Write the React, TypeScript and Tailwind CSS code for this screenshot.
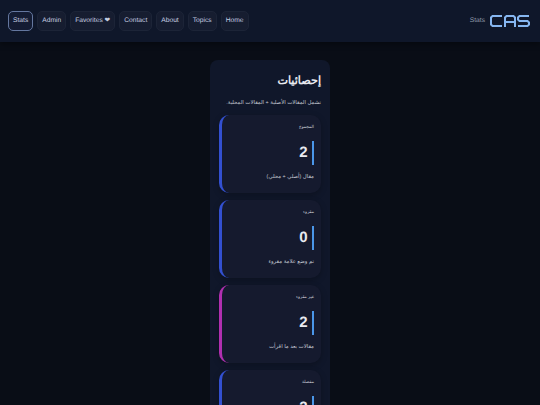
import { FC } from 'react'

const navItems = ['Stats', 'Admin', 'Favorites ❤', 'Contact', 'About', 'Topics', 'Home']

const stats = [
  { label: 'المجموع', value: 2, note: 'مقال (أصلي + محلي)', accent: 'border-l-[#3350d0]' },
  { label: 'مقروء', value: 0, note: 'تم وضع علامة مقروء', accent: 'border-l-[#3350d0]' },
  { label: 'غير مقروء', value: 2, note: 'مقالات بعد ما اقرأت', accent: 'border-l-[#b02fb0]' },
  { label: 'مفضلة', value: 2, note: 'مقالات مفضلة', accent: 'border-l-[#3350d0]' },
]

const StatCard: FC<(typeof stats)[number]> = ({ label, value, note, accent }) => (
  <div className={`h-[78px] shrink-0 rounded-[10px] border-l-[3px] bg-[#151a2e] pl-2 pr-[7px] pt-[9px] shadow-[0_2px_6px_rgba(0,0,0,0.25)] ${accent}`}>
    <div className="h-[6px] text-[4.3px] leading-[6px] text-[#c4c8d2]">{label}</div>
    <div className="mt-[11px] flex h-6 items-center justify-start gap-[4.5px]">
      <div className="h-6 w-[2px] bg-[#4a96e8]" />
      <div className="text-[15px] font-bold leading-6 text-[#e8eaf0]">{value}</div>
    </div>
    <div className="mt-[8px] text-[5.4px] leading-[8px] text-[#c4c8d2]">{note}</div>
  </div>
)

export default function App() {
  return (
    <div className="h-[405px] overflow-hidden bg-[#090d16] font-['Liberation_Sans',sans-serif] antialiased [text-rendering:geometricPrecision]">
      <header className="flex h-[42px] items-center justify-between bg-[#0f172a] pl-2 pr-[10px] shadow-[0_2px_6px_rgba(0,0,0,0.4)]">
        <nav className="flex items-center gap-1">
          {navItems.map((item, i) => (
            <a
              key={item}
              className={`flex h-5 items-center whitespace-nowrap rounded-[5px] border px-[4px] text-[6.7px] text-[#c5cee0] ${
                i === 0 ? 'border-[#64779f] bg-[#141c33]' : 'border-[#1c2437] bg-[#161d30]'
              }`}
            >
              {item}
            </a>
          ))}
        </nav>
        <div className="flex items-center gap-[5px]">
          <span className="text-[6.7px] text-[#8f97a8]">Stats</span>
          <svg width="40" height="12" viewBox="0 0 40 12" fill="none" stroke="#86b6f0" strokeWidth="2">
            <path d="M12 1H2.5L1 2.5v7L2.5 11H12" />
            <path d="M15 12V2.5L16.5 1h7L25 2.5V12M15 7h10" />
            <path d="M39 1h-9.5L28 2.5v2L29.5 6h8L39 7.5v2L37.5 11H28" />
          </svg>
        </div>
      </header>

      <main className="flex justify-center pt-[18px]">
        <section dir="rtl" className="flex h-[400px] w-[120px] flex-col rounded-t-[8px] bg-[#10172a] px-[9px] pt-[14px]">
          <h1 className="text-[11.2px] font-bold leading-[14px] text-[#e8eaf0]">إحصائيات</h1>
          <p className="mt-[11px] whitespace-nowrap text-[5.4px] leading-[8px] text-[#c4c8d2]">
            تشمل المقالات الأصلية + المقالات المحلية.
          </p>
          <div className="mt-[8px] flex flex-col gap-[7px]">
            {stats.map((s) => (
              <StatCard key={s.label} {...s} />
            ))}
          </div>
        </section>
      </main>
    </div>
  )
}
